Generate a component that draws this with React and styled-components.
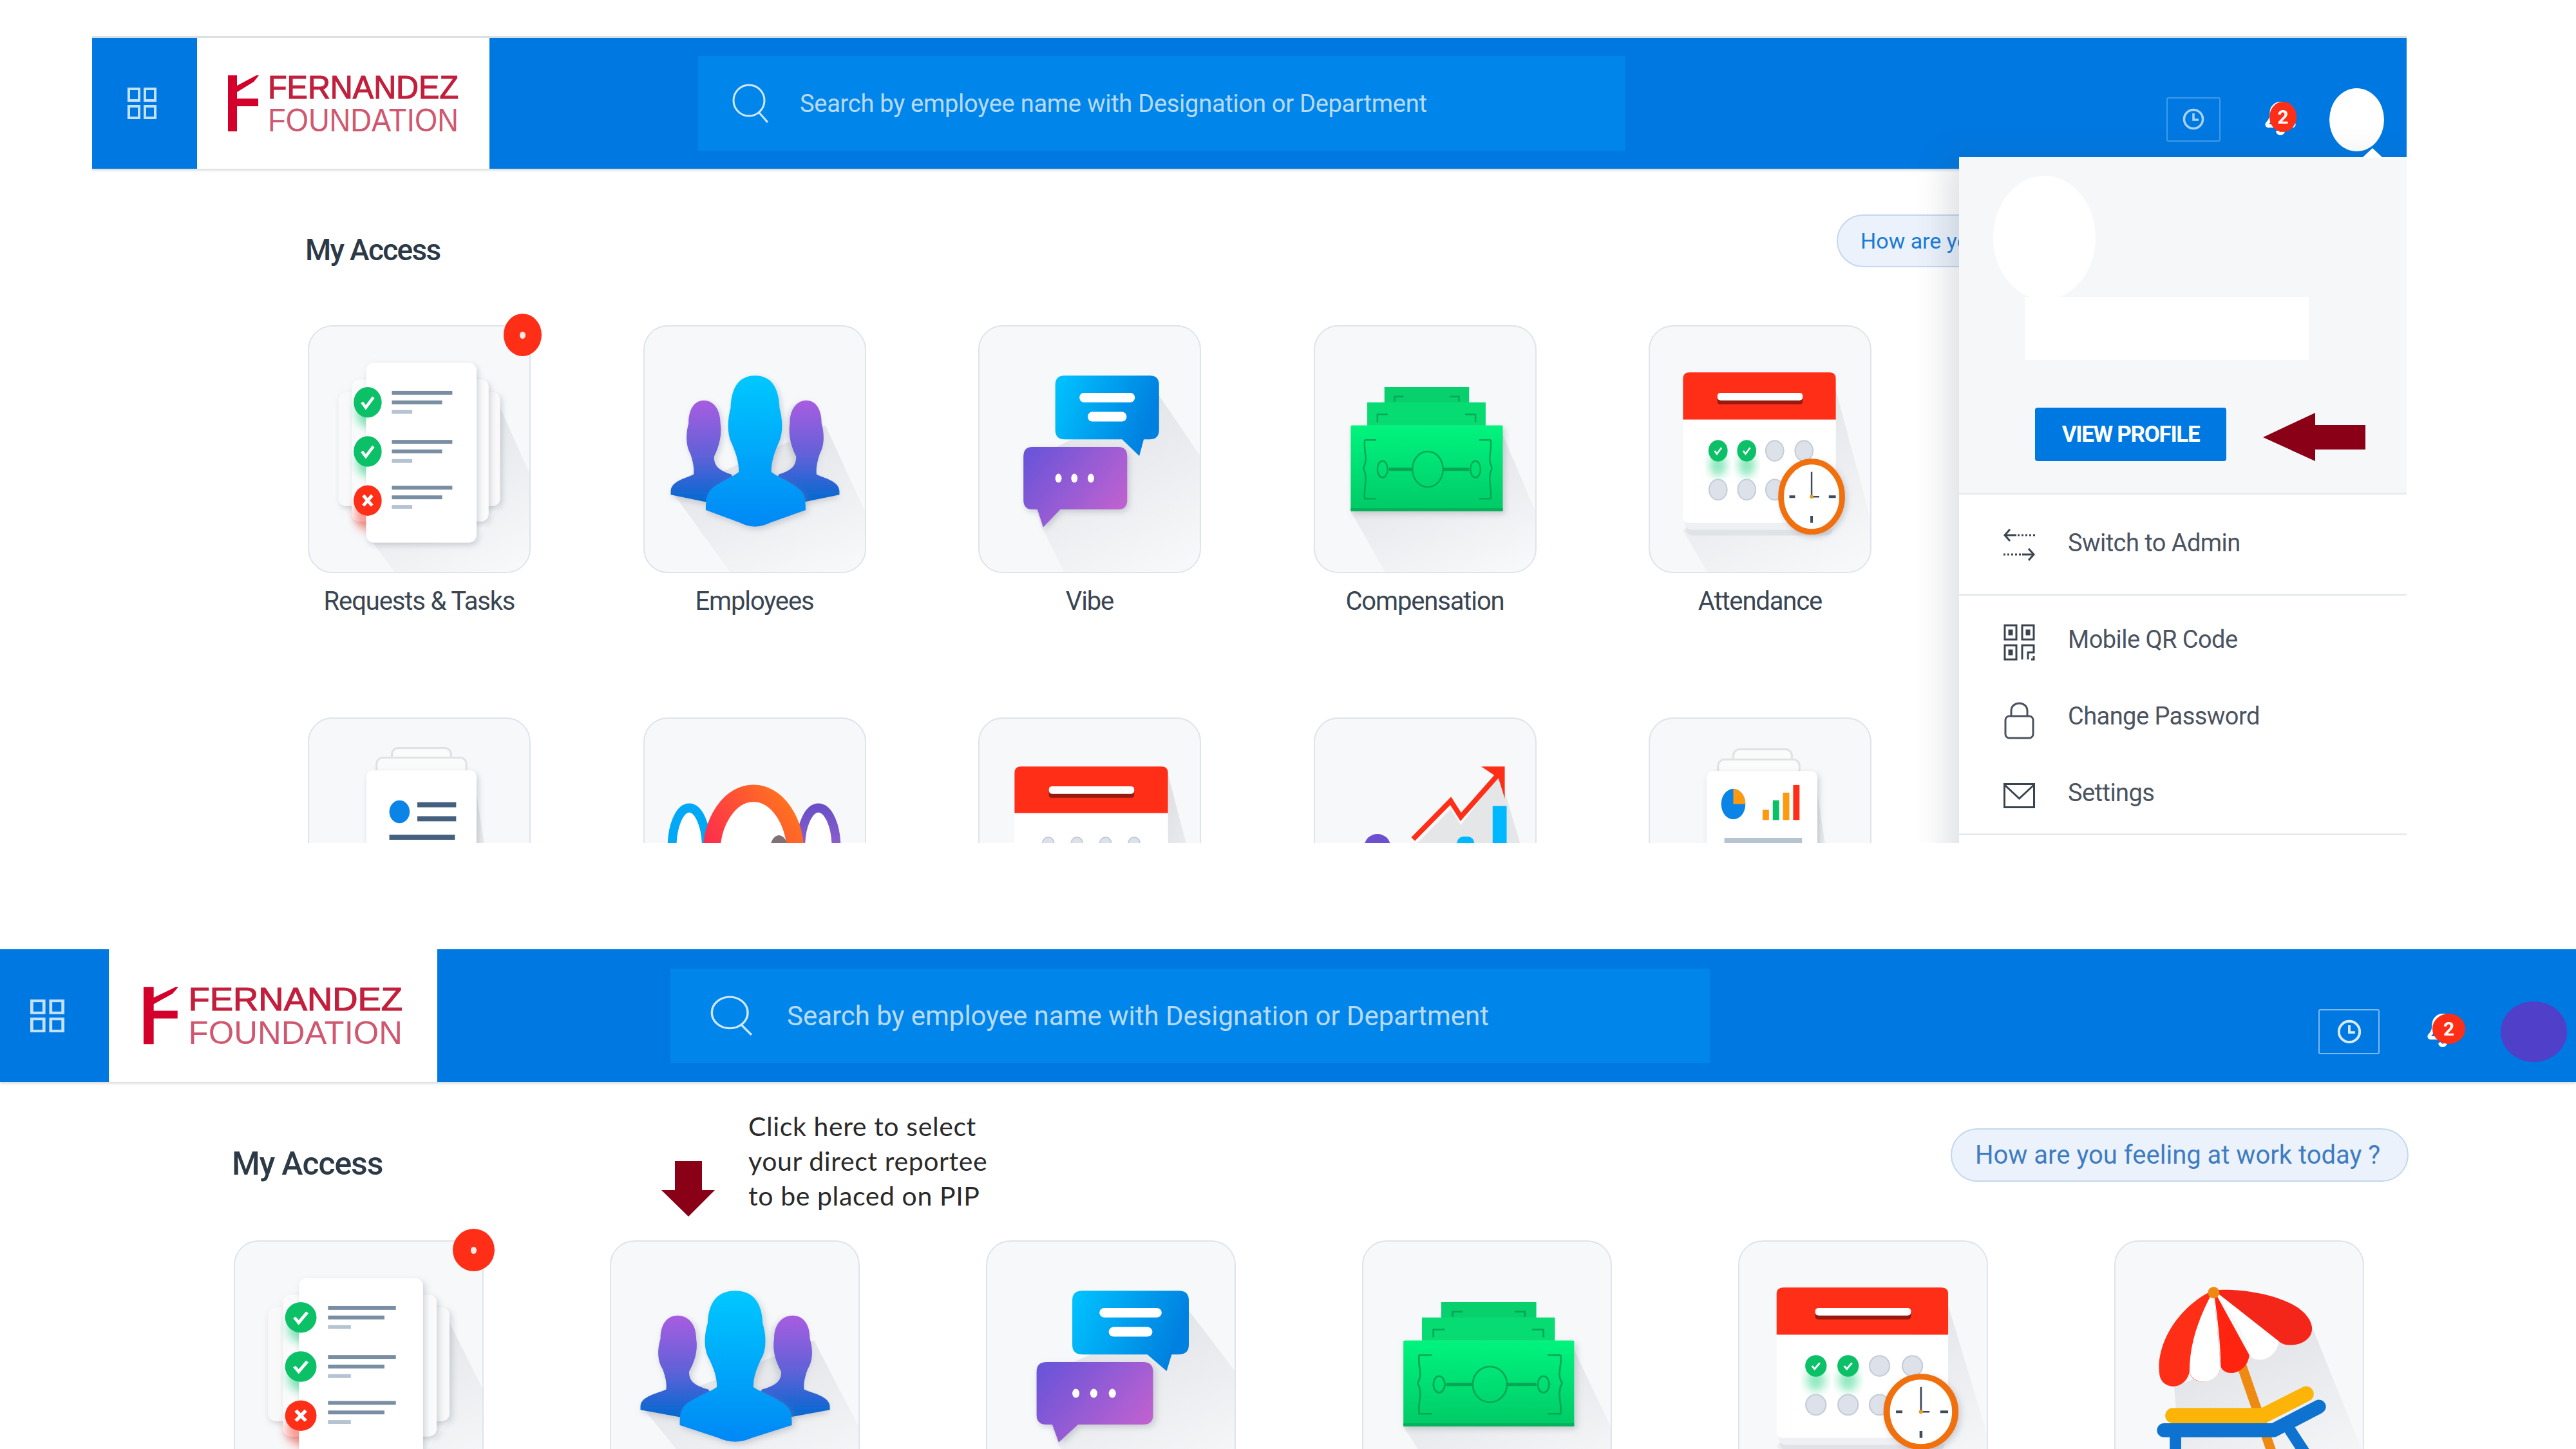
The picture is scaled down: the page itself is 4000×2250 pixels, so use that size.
import React from 'react';
import styled, { createGlobalStyle } from 'styled-components';
import { Bell } from 'lucide-react';

const TOP = {
	headH: 203, line: 3, gridW: 163, gridShift: 8, gridIconW: 45, gridIconH: 49, logoW: 454,
	searchGap: 324, searchW: 1439, searchPad: 53, searchIconW: 56, searchIconH: 61, searchTextGap: 49, searchFs: 38, searchLs: -0.26,
	boxW: 84, boxH: 69, boxLift: 2, clockSize: 34, boxColor: '#3f9bea', clockColor: '#a8d3f5', bellGap: 65, bellW: 53, badgeW: 42,
	avatarGap: 51, avatarW: 85, avatarH: 98, avatarBg: '#fff', actionsBottom: 27, actionsRight: 35,
	bodyLeft: 331, rowTop: 71, titleFs: 46, titleLs: -1.7, pillFs: 34, pillW: 640, pillH: 82, pillColor: '#1a7ad6', rowRight: 245,
	gridTop: 90, gridLeft: 4, colW: 346, colGap: 174.5, textPad: 35,
};
const BOTTOM = {
	headH: 206, line: 0, gridW: 169, gridShift: 22, gridIconW: 53, gridIconH: 51, logoW: 510,
	searchGap: 362, searchW: 1614, searchPad: 62, searchIconW: 65, searchIconH: 62, searchTextGap: 54, searchFs: 42, searchLs: -0.03,
	boxW: 95, boxH: 70, boxLift: 0, clockSize: 38, boxColor: '#7db9ef', clockColor: '#d7ebfb', bellGap: 70, bellW: 63, badgeW: 51,
	avatarGap: 55, avatarW: 103, avatarH: 94, avatarBg: '#4f3fc9', actionsBottom: 31, actionsRight: 14,
	bodyLeft: 360, rowTop: 72, titleFs: 50, titleLs: -1.1, pillFs: 40, pillW: 711, pillH: 83, pillColor: '#3f7cc0', rowRight: 260,
	gridTop: 91, gridLeft: 3, colW: 388, colGap: 196, textPad: 36,
};

const GlobalStyle = createGlobalStyle`
	html, body { margin: 0; padding: 0; background: #fff; }
	body { width: 4000px; height: 2250px; overflow: hidden; font-family: Roboto, 'Liberation Sans', sans-serif; }
`;

const Page = styled.div`
	width: 4000px;
	height: 2250px;
	overflow: hidden;
	background: #fff;
	padding-top: 0.1px;
	box-sizing: border-box;
`;

const TopShot = styled.section`
	position: relative;
	width: 3594px;
	height: 1253px;
	margin: 56px 0 0 143px;
	overflow: hidden;
`;

const BottomShot = styled.section`
	position: relative;
	width: 4000px;
	height: 776px;
	margin-top: 165px;
	overflow: hidden;
`;

const HeaderBar = styled.header`
	display: flex;
	align-items: center;
	height: ${(p) => p.$m.headH + p.$m.line}px;
	box-sizing: border-box;
	background: #0078e1;
	border-top: ${(p) => p.$m.line}px solid #dcdfe3;
	box-shadow: 0 3px 3px rgba(120, 130, 140, 0.25);
`;

const GridCell = styled.div`
	display: flex;
	align-items: center;
	justify-content: center;
	box-sizing: border-box;
	width: ${(p) => p.$m.gridW}px;
	height: 100%;
	padding-right: ${(p) => p.$m.gridShift}px;
	flex: none;
`;

const GridIcon = styled.svg`
	width: ${(p) => p.$m.gridIconW}px;
	height: ${(p) => p.$m.gridIconH}px;
`;

const LogoCell = styled.div`
	width: ${(p) => p.$m.logoW}px;
	height: 100%;
	flex: none;
	background: #fff;
`;

const LogoSvg = styled.svg`
	display: block;
	width: 100%;
	height: 100%;
`;

const SearchBox = styled.div`
	display: flex;
	align-items: center;
	flex: none;
	margin-left: ${(p) => p.$m.searchGap}px;
	width: ${(p) => p.$m.searchW}px;
	height: 147px;
	padding-left: ${(p) => p.$m.searchPad}px;
	box-sizing: border-box;
	background: #0086ea;
	color: #b9daf6;
	font-size: ${(p) => p.$m.searchFs}px;
	letter-spacing: ${(p) => p.$m.searchLs}px;
	white-space: nowrap;
`;

const SearchIcon = styled.svg`
	width: ${(p) => p.$m.searchIconW}px;
	height: ${(p) => p.$m.searchIconH}px;
	margin-right: ${(p) => p.$m.searchTextGap}px;
	flex: none;
`;

const Actions = styled.div`
	display: flex;
	align-items: center;
	margin-left: auto;
	align-self: flex-end;
	margin-bottom: ${(p) => p.$m.actionsBottom}px;
	padding-right: ${(p) => p.$m.actionsRight}px;
`;

const ClockBox = styled.div`
	display: flex;
	align-items: center;
	justify-content: center;
	width: ${(p) => p.$m.boxW}px;
	height: ${(p) => p.$m.boxH}px;
	margin-bottom: ${(p) => p.$m.boxLift}px;
	box-sizing: border-box;
	border: 2px solid ${(p) => p.$m.boxColor};
	border-radius: 3px;
`;

const BellWrap = styled.div`
	position: relative;
	width: ${(p) => p.$m.bellW}px;
	height: 60px;
	margin-left: ${(p) => p.$m.bellGap}px;
	color: #fff;
`;

const BellBadge = styled.span`
	position: absolute;
	top: 2px;
	right: 0;
	display: flex;
	align-items: center;
	justify-content: center;
	width: ${(p) => p.$m.badgeW}px;
	height: 47px;
	border-radius: 50%;
	background: #ff2e17;
	color: #fff;
	font-size: 30px;
	font-weight: 700;
`;

const Avatar = styled.div`
	width: ${(p) => p.$m.avatarW}px;
	height: ${(p) => p.$m.avatarH}px;
	margin-left: ${(p) => p.$m.avatarGap}px;
	border-radius: 50%;
	background: ${(p) => p.$m.avatarBg};
`;

const Body = styled.main`
	padding-left: ${(p) => p.$m.bodyLeft}px;
`;

const TitleRow = styled.div`
	display: flex;
	align-items: flex-start;
	height: ${(p) => p.$m.pillH}px;
	padding-top: ${(p) => p.$m.rowTop}px;
	padding-right: ${(p) => p.$m.rowRight}px;
`;

const Title = styled.h2`
	margin: 25px 0 0;
	line-height: 60px;
	font-size: ${(p) => p.$m.titleFs}px;
	font-weight: 500;
	letter-spacing: ${(p) => p.$m.titleLs}px;
	color: #2c3947;
	white-space: nowrap;
	flex: ${(p) => (p.$w ? `0 0 ${p.$w}px` : 'none')};
`;

const DownArrow = styled.svg`
	flex: none;
	width: 83px;
	height: 86px;
	margin-top: 51px;
`;

const Note = styled.p`
	flex: none;
	margin: -30px 0 0 52px;
	font-family: Lato, 'Open Sans', sans-serif;
	font-size: 41px;
	letter-spacing: 0.6px;
	line-height: 54px;
	color: #2a2a2a;
	white-space: nowrap;
`;

const Pill = styled.div`
	display: flex;
	align-items: center;
	flex: none;
	margin-left: auto;
	width: ${(p) => p.$m.pillW}px;
	height: ${(p) => p.$m.pillH}px;
	padding-left: ${(p) => p.$m.textPad}px;
	box-sizing: border-box;
	background: #ebf2fb;
	border: 2px solid #c3d7ee;
	border-radius: 42px;
	color: ${(p) => p.$m.pillColor};
	font-size: ${(p) => p.$m.pillFs}px;
	white-space: nowrap;
`;

const TileGrid = styled.div`
	display: grid;
	grid-template-columns: repeat(${(p) => p.$cols}, ${(p) => p.$m.colW}px);
	column-gap: ${(p) => p.$m.colGap}px;
	row-gap: 158px;
	margin: ${(p) => p.$m.gridTop}px 0 0 ${(p) => p.$m.gridLeft}px;
`;

const Tile = styled.div`
	display: flex;
	flex-direction: column;
	align-items: center;
`;

const Card = styled.div`
	position: relative;
	box-sizing: border-box;
	width: 100%;
	height: 385px;
	background: #f6f8fa;
	border: 2px solid #dfe4ea;
	border-radius: 38px;
`;

const CardBadge = styled.span`
	position: absolute;
	top: -20px;
	right: -19px;
	display: flex;
	align-items: center;
	justify-content: center;
	width: ${(p) => (p.$m.colW > 346 ? 65 : 59)}px;
	height: 66px;
	border-radius: 50%;
	background: #ff2e17;

	&::after {
		content: '';
		width: 9px;
		height: 11px;
		border-radius: 50%;
		background: #ffe9e6;
	}
`;

const Art = styled.svg.attrs((p) => ({
	viewBox: p.$box || '0 0 346 385',
	preserveAspectRatio: 'none',
}))`
	display: block;
	width: 100%;
	height: 100%;
	border-radius: 36px;
	overflow: hidden;
`;

const Label = styled.div`
	margin-top: 22px;
	line-height: 44px;
	font-size: 40px;
	letter-spacing: -1.15px;
	color: #3a4552;
	white-space: nowrap;
`;

const ProfilePanel = styled.aside`
	position: absolute;
	top: 188px;
	right: 0;
	width: 695px;
	height: 1200px;
	background: #fff;
	box-shadow: -22px 0 44px rgba(70, 80, 95, 0.16);

	&::before {
		content: '';
		position: absolute;
		top: -14px;
		right: 37px;
		border-left: 16px solid transparent;
		border-right: 16px solid transparent;
		border-bottom: 15px solid #fff;
	}
`;

const PanelHead = styled.div`
	box-sizing: border-box;
	height: 524px;
	padding: 29px 0 0 53px;
	background: #f6f7f9;
	border-bottom: 3px solid #e8ebee;
`;

const PanelPhoto = styled.div`
	width: 159px;
	height: 192px;
	border-radius: 50%;
	background: #fff;
`;

const PanelName = styled.div`
	width: 441px;
	height: 98px;
	margin: -4px 0 0 49px;
	background: #fff;
`;

const ButtonRow = styled.div`
	display: flex;
	align-items: flex-end;
	gap: 57px;
	margin: 74px 0 0 65px;
`;

const ViewButton = styled.button`
	width: 297px;
	height: 83px;
	padding: 0;
	border: 0;
	border-radius: 4px;
	background: #0078e1;
	color: #fff;
	font-family: Roboto, sans-serif;
	font-size: 35px;
	font-weight: 700;
	letter-spacing: -1.3px;
`;

const MenuGroup = styled.div`
	box-sizing: border-box;
	height: ${(p) => p.$h}px;
	padding-top: ${(p) => p.$pad}px;
	border-bottom: 3px solid #e8ebee;
`;

const MenuRow = styled.div`
	display: flex;
	align-items: center;
	height: ${(p) => p.$h}px;
	padding-left: 69px;
	font-size: 38px;
	letter-spacing: -0.55px;
	color: #4a5360;
`;

const MenuIcon = styled.svg`
	flex: none;
	width: 49px;
	height: ${(p) => p.$h}px;
	margin: ${(p) => p.$drop}px 51px 0 0;
`;

const Check = ({ x, y, s = 1 }) => (
	<path
		d={`M${x - 9 * s} ${y} l${6 * s} ${8 * s} l${12 * s} ${-16 * s}`}
		fill='none'
		stroke='#fff'
		strokeWidth={4.5 * s}
	/>
);

const ArtDefs = () => (
	<defs>
		<linearGradient id='longShadow' x1='0.3' y1='0' x2='0.8' y2='1'>
			<stop offset='0' stopColor='#dfe1e4' />
			<stop offset='1' stopColor='#f6f8fa' />
		</linearGradient>
		<linearGradient id='blueFig' x1='0' y1='0' x2='0' y2='1'>
			<stop offset='0' stopColor='#00c8ff' />
			<stop offset='1' stopColor='#0088f5' />
		</linearGradient>
		<linearGradient id='sideFig' x1='0' y1='0' x2='0' y2='1'>
			<stop offset='0' stopColor='#a85ce0' />
			<stop offset='0.55' stopColor='#5f62d8' />
			<stop offset='1' stopColor='#0068d0' />
		</linearGradient>
		<linearGradient id='blueBubble' x1='0' y1='0' x2='1' y2='0.3'>
			<stop offset='0' stopColor='#00c4ff' />
			<stop offset='1' stopColor='#0080e0' />
		</linearGradient>
		<linearGradient id='purpleBubble' x1='0' y1='0.2' x2='1' y2='0.8'>
			<stop offset='0' stopColor='#6c55d8' />
			<stop offset='1' stopColor='#c462d0' />
		</linearGradient>
		<linearGradient id='money' x1='0.5' y1='0' x2='0.5' y2='1'>
			<stop offset='0' stopColor='#00f47e' />
			<stop offset='1' stopColor='#00ca66' />
		</linearGradient>
		<linearGradient id='ringHot' x1='0' y1='1' x2='1' y2='0'>
			<stop offset='0' stopColor='#ff1060' />
			<stop offset='1' stopColor='#ff7a1a' />
		</linearGradient>
		<linearGradient id='ringViolet' x1='0' y1='0' x2='0' y2='1'>
			<stop offset='0' stopColor='#6a50c8' />
			<stop offset='1' stopColor='#b070d0' />
		</linearGradient>
		<filter id='soft' x='-30%' y='-30%' width='160%' height='160%'>
			<feGaussianBlur stdDeviation='7' />
		</filter>
		<filter id='drop' x='-20%' y='-20%' width='140%' height='140%'>
			<feDropShadow dx='3' dy='4' stdDeviation='5' floodColor='#8b929b' floodOpacity='0.4' />
		</filter>
	</defs>
);

const TaskLines = ({ y }) => (
	<g>
		<rect x='130' y={y} width='95' height='6' fill='#7a8ea3' />
		<rect x='130' y={y + 15} width='79' height='6' fill='#7a8ea3' />
		<rect x='130' y={y + 30} width='32' height='6' fill='#b6c3d1' />
	</g>
);

const RequestsArt = () => (
	<Art>
		<ArtDefs />
		<polygon points='296,118 346,230 346,385 134,385 100,339 263,339 282,306 300,282' fill='url(#longShadow)' />
		<rect x='46' y='103' width='254' height='179' rx='12' fill='#f9f9fa' filter='url(#drop)' />
		<rect x='67' y='83' width='215' height='223' rx='12' fill='#fbfbfc' filter='url(#drop)' />
		<ellipse cx='92' cy='136' rx='18' ry='22' fill='#19d07b' opacity='0.55' filter='url(#soft)' />
		<ellipse cx='92' cy='213' rx='18' ry='22' fill='#19d07b' opacity='0.55' filter='url(#soft)' />
		<ellipse cx='92' cy='295' rx='20' ry='26' fill='#ff3b2a' opacity='0.5' filter='url(#soft)' />
		<rect x='89.5' y='57' width='173.5' height='282' rx='12' fill='#fff' filter='url(#drop)' />
		<ellipse cx='92' cy='119' rx='22' ry='24' fill='#0cc068' />
		<Check x={92} y={119} />
		<ellipse cx='92' cy='196' rx='22' ry='24' fill='#0cc068' />
		<Check x={92} y={196} />
		<ellipse cx='92' cy='273' rx='22' ry='24' fill='#ff2e17' />
		<path d='M85 265 l14 16 M99 265 l-14 16' stroke='#fff' strokeWidth='5' />
		<TaskLines y={101} />
		<TaskLines y={178} />
		<TaskLines y={250} />
	</Art>
);

const sidePath =
	'M93 116 C78 116 69 130 69 152 C64 170 65 188 72 200 C76 212 78 222 77 232 C66 238 42 242 41 258 L41 264 L100 276 L160 276 L136 232 C118 226 109 220 109 204 C116 190 122 172 119 152 C119 130 108 116 93 116 Z';

const EmployeesArt = () => (
	<Art>
		<ArtDefs />
		<polygon points='284,155 346,290 346,385 134,385 45,262' fill='url(#longShadow)' />
		<path d={sidePath} fill='url(#sideFig)' filter='url(#drop)' />
		<path d={sidePath} fill='url(#sideFig)' filter='url(#drop)' transform='matrix(-1 0 0 1 347 0)' />
		<path
			d='M173.5 77 C148 77 136 96 135 128 C130 146 129 168 137 184 C143 198 148 212 148 228 C138 236 118 244 106 254 C98 262 96 270 96 288 L150 308 Q173 320 197 308 L253 288 C253 270 251 262 241 254 C229 244 209 236 199 228 C199 212 204 198 210 184 C218 168 217 146 212 128 C211 96 199 77 173.5 77 Z'
			fill='url(#blueFig)'
			filter='url(#drop)'
		/>
	</Art>
);

const VibeArt = () => (
	<Art>
		<ArtDefs />
		<polygon points='282,108 346,202 346,385 133,385 98,315 70,230 119,190' fill='url(#longShadow)' />
		<path
			d='M133 77 H268 Q282 77 282 92 V162 Q282 177 268 177 H258 L251 203 L224 177 H133 Q119 177 119 162 V92 Q119 77 133 77 Z'
			fill='url(#blueBubble)'
		/>
		<rect x='157' y='104' width='87' height='15' rx='7' fill='#fff' />
		<rect x='170' y='134' width='61' height='15' rx='7' fill='#fff' />
		<path
			d='M83 189 H218 Q232 189 232 204 V272 Q232 287 218 287 H127 L100 315 L91 287 H83 Q69 287 69 272 V204 Q69 189 83 189 Z'
			fill='url(#purpleBubble)'
			filter='url(#drop)'
		/>
		<ellipse cx='124' cy='238' rx='5' ry='7' fill='#fff' />
		<ellipse cx='149' cy='238' rx='5' ry='7' fill='#fff' />
		<ellipse cx='175' cy='238' rx='5' ry='7' fill='#fff' />
	</Art>
);

const CompensationArt = () => (
	<Art>
		<ArtDefs />
		<polygon points='295,170 346,290 346,385 110,385 56,290' fill='url(#longShadow)' />
		<rect x='109' y='95' width='133' height='30' fill='#08d06c' />
		<path d='M125 118 v-8 h14 M226 118 v-8 h-14' fill='none' stroke='#06a655' strokeWidth='2.5' />
		<rect x='82' y='119' width='186' height='40' fill='#06dc72' />
		<path d='M98 150 v-12 h16 M252 150 v-12 h-16' fill='none' stroke='#06a655' strokeWidth='2.5' />
		<rect x='56' y='155' width='239' height='135' rx='2' fill='url(#money)' filter='url(#drop)' />
		<rect x='56' y='285' width='239' height='5' fill='#05b25a' />
		<g fill='none' stroke='#06a655' strokeWidth='2.5'>
			<ellipse cx='177' cy='224' rx='24' ry='28' />
			<ellipse cx='106' cy='224' rx='8' ry='13' />
			<ellipse cx='252' cy='224' rx='8' ry='13' />
			<path d='M116 224 H153 M201 224 H242' strokeWidth='5' />
			<path d='M78 178 H96 M78 178 C76 200 84 206 76 222 C84 240 76 250 78 270 H96' />
			<path d='M276 178 H258 M276 178 C278 200 270 206 278 222 C270 240 278 250 276 270 H258' />
		</g>
	</Art>
);

const Dot = ({ x, y, on }) =>
	on ? (
		<g>
			<ellipse cx={x} cy={y + 22} rx='13' ry='18' fill='#19d07b' opacity='0.5' filter='url(#soft)' />
			<ellipse cx={x} cy={y} rx='15' ry='17' fill='#0cc068' />
			<Check x={x} y={y} s={0.6} />
		</g>
	) : (
		<ellipse cx={x} cy={y} rx='14' ry='16' fill='#dde2ea' stroke='#c5ccd8' strokeWidth='2' />
	);

const AttendanceArt = () => (
	<Art>
		<ArtDefs />
		<polygon points='292,100 346,300 346,385 90,385 52,320' fill='url(#longShadow)' />
		<rect x='57' y='290' width='230' height='38' rx='10' fill='#dfe3e8' />
		<rect x='55' y='285' width='235' height='34' rx='10' fill='#eef0f3' />
		<path d='M52 146 H292 V298 Q292 308 282 308 H62 Q52 308 52 298 Z' fill='#fff' />
		<path d='M62 72 H282 Q292 72 292 82 V146 H52 V82 Q52 72 62 72 Z' fill='#ff2e17' />
		<rect x='106' y='108' width='134' height='14' rx='4' fill='#961a10' />
		<rect x='106' y='104' width='134' height='12' rx='5' fill='#fff' />
		<Dot x={107} y={195} on />
		<Dot x={152} y={195} on />
		<Dot x={196} y={195} />
		<Dot x={242} y={195} />
		<Dot x={107} y={256} />
		<Dot x={152} y={256} />
		<Dot x={196} y={256} />
		<ellipse cx='254' cy='267' rx='48' ry='55' fill='#fff' stroke='#f07010' strokeWidth='9' filter='url(#drop)' />
		<path d='M254 228 V267 H266' stroke='#3d4b5c' strokeWidth='2.5' fill='none' />
		<path d='M254 297 v11 M219 267 h9 M281 267 h11' stroke='#3d4b5c' strokeWidth='4' fill='none' />
		<circle cx='254' cy='267' r='3' fill='#e0a020' />
	</Art>
);

const IdCardArt = () => (
	<Art>
		<ArtDefs />
		<g transform='translate(0 -23)'>
			<polygon points='263,140 300,385 230,385' fill='url(#longShadow)' />
			<rect x='130' y='69' width='93' height='50' rx='10' fill='#fafbfb' stroke='#dfe1e4' strokeWidth='3' />
			<rect x='106' y='84' width='141' height='50' rx='10' fill='#fafbfb' stroke='#dfe1e4' strokeWidth='3' />
			<rect x='90' y='104' width='173' height='240' rx='10' fill='#fff' filter='url(#drop)' />
			<ellipse cx='142' cy='169' rx='16' ry='18' fill='#0a84e6' />
			<rect x='170' y='154' width='61' height='8' fill='#45607f' />
			<rect x='170' y='176' width='61' height='8' fill='#45607f' />
			<rect x='126' y='205' width='103' height='8' fill='#45607f' />
		</g>
	</Art>
);

const PeopleArt = () => (
	<Art>
		<ArtDefs />
		<g transform='translate(0 -23)'>
			<ellipse cx='70' cy='225' rx='27' ry='62' fill='#fff' stroke='#00a8f5' strokeWidth='14' />
			<ellipse cx='273' cy='225' rx='28' ry='62' fill='#fff' stroke='url(#ringViolet)' strokeWidth='14' />
			<ellipse cx='171' cy='235' rx='66' ry='95' fill='#fff' stroke='url(#ringHot)' strokeWidth='27' />
			<ellipse cx='211' cy='228' rx='14' ry='22' fill='#7f7277' />
		</g>
	</Art>
);

const CalendarArt = () => (
	<Art>
		<ArtDefs />
		<g transform='translate(0 -23)'>
			<polygon points='296,110 346,300 346,385 296,385' fill='url(#longShadow)' />
			<path d='M55 171 H296 V385 H55 Z' fill='#fff' />
			<path d='M65 98 H286 Q296 98 296 108 V171 H55 V108 Q55 98 65 98 Z' fill='#ff2e17' />
			<rect x='109' y='133' width='134' height='14' rx='4' fill='#961a10' />
			<rect x='109' y='129' width='134' height='12' rx='5' fill='#fff' />
			{[108, 153, 198, 243].map((x) => (
				<ellipse key={x} cx={x} cy='218' rx='9' ry='9' fill='#dde2ea' stroke='#c5ccd8' strokeWidth='2' />
			))}
		</g>
	</Art>
);

const GrowthArt = () => (
	<Art>
		<ArtDefs />
		<g transform='translate(0 -23)'>
			<polygon points='290,110 346,300 346,385 154,385 154,225 213,165 229,190' fill='#e5e6e8' />
			<ellipse cx='98' cy='222' rx='20' ry='18' fill='#6d50d0' />
			<rect x='223' y='208' width='27' height='60' rx='10' fill='#00b8ff' />
			<rect x='279' y='160' width='22' height='100' fill='#00b8ff' />
			<path d='M154 212 L213 152 L229 177 L290 108' fill='none' stroke='#ff2e17' strokeWidth='8' />
			<path d='M261 98 H298 V148 L288 116 Z' fill='#ff2e17' />
		</g>
	</Art>
);

const ReportArt = () => (
	<Art>
		<ArtDefs />
		<g transform='translate(0 -23)'>
			<polygon points='263,140 300,385 230,385' fill='url(#longShadow)' />
			<rect x='131' y='71' width='92' height='50' rx='10' fill='#fafbfb' stroke='#dfe1e4' strokeWidth='3' />
			<rect x='107' y='87' width='128' height='50' rx='10' fill='#fafbfb' stroke='#dfe1e4' strokeWidth='3' />
			<rect x='89' y='105' width='174' height='240' rx='10' fill='#fff' filter='url(#drop)' />
			<ellipse cx='131' cy='157' rx='19' ry='24' fill='#0a84e6' />
			<path d='M131 157 V133 A19 24 0 0 1 150 157 Z' fill='#ff9a10' />
			<rect x='177' y='166' width='10' height='16' fill='#ff9a10' />
			<rect x='193' y='151' width='10' height='31' fill='#0cc068' />
			<rect x='209' y='139' width='10' height='43' fill='#ff9a10' />
			<rect x='225' y='127' width='10' height='55' fill='#ff2e17' />
			<rect x='117' y='210' width='122' height='12' fill='#b6c3d1' />
		</g>
	</Art>
);

const LeaveArt = () => (
	<Art $box='0 0 388 385'>
		<ArtDefs />
		<polygon points='308,133 388,330 388,385 150,385 100,320 92,229' fill='url(#longShadow)' />
		<path d='M196 189 L245 330' stroke='#ee8a12' strokeWidth='15' fill='none' />
		<path d='M154 76 C100 100 62 160 69 209 C72 232 108 236 116 205 C120 226 160 226 165 196 L154 76 Z' fill='#ff2e17' />
		<path d='M154 76 C130 120 116 160 116 205 C122 226 160 226 165 196 Z' fill='#fff' />
		<path d='M154 76 C160 120 165 160 165 196 C172 214 206 208 210 178 Z' fill='#ff2410' />
		<path d='M154 76 C180 110 204 140 210 178 C224 194 254 182 256 156 Z' fill='#fff' />
		<path d='M154 76 C210 72 300 90 308 133 C312 160 270 170 256 156 Z' fill='#f4261a' />
		<circle cx='154' cy='80' r='9' fill='#ee8a12' />
		<path d='M90 273 H232 L299 239' stroke='#fdb408' strokeWidth='24' strokeLinejoin='round' strokeLinecap='round' fill='none' />
		<path d='M76 296 H248 L319 259' stroke='#0d72d0' strokeWidth='22' strokeLinejoin='round' strokeLinecap='round' fill='none' />
		<path d='M94 300 V330 M270 290 L296 330' stroke='#0d72d0' strokeWidth='18' strokeLinecap='round' />
	</Art>
);

const Logo = () => (
	<LogoSvg viewBox='0 0 454 203' preserveAspectRatio='none'>
		<path d='M48 58 H62 V145 H48 Z M62 94 H95 V106 H62 Z M62 74 L92 58 H96 L88 68 L62 84 Z' fill='#d2002a' />
		<text
			x='110'
			y='94'
			textLength='296'
			lengthAdjust='spacingAndGlyphs'
			fontFamily='Liberation Sans, sans-serif'
			fontSize='50'
			fill='#c21f3c'
			stroke='#c21f3c'
			strokeWidth='1.2'
		>
			FERNANDEZ
		</text>
		<text
			x='110'
			y='145'
			textLength='296'
			lengthAdjust='spacingAndGlyphs'
			fontFamily='Liberation Sans, sans-serif'
			fontSize='50'
			fill='#cf5870'
		>
			FOUNDATION
		</text>
	</LogoSvg>
);

const Header = ({ m }) => (
	<HeaderBar $m={m}>
		<GridCell $m={m}>
			<GridIcon $m={m} viewBox='0 0 45 49' preserveAspectRatio='none' fill='none' stroke='#c3e1fa' strokeWidth='4'>
				<rect x='2' y='2' width='16' height='18' />
				<rect x='27' y='2' width='16' height='18' />
				<rect x='2' y='29' width='16' height='18' />
				<rect x='27' y='29' width='16' height='18' />
			</GridIcon>
		</GridCell>
		<LogoCell $m={m}>
			<Logo />
		</LogoCell>
		<SearchBox $m={m}>
			<SearchIcon $m={m} viewBox='0 0 56 61' preserveAspectRatio='none' fill='none' stroke='#d2e6f8' strokeWidth='3'>
				<ellipse cx='26' cy='26' rx='24' ry='24' />
				<path d='M41 44 L55 60' />
			</SearchIcon>
			Search by employee name with Designation or Department
		</SearchBox>
		<Actions $m={m}>
			<ClockBox $m={m}>
				<svg width={m.clockSize} height={m.clockSize} viewBox='0 0 34 34' fill='none' stroke={m.clockColor} strokeWidth='3.5'>
					<circle cx='17' cy='17' r='14.5' />
					<path d='M17 8 V18 H25' />
				</svg>
			</ClockBox>
			<BellWrap $m={m}>
				<Bell size={56} strokeWidth={2.2} />
				<BellBadge $m={m}>2</BellBadge>
			</BellWrap>
			<Avatar $m={m} />
		</Actions>
	</HeaderBar>
);

const FIRST_ROW = [
	{ label: 'Requests & Tasks', art: RequestsArt, badge: true },
	{ label: 'Employees', art: EmployeesArt },
	{ label: 'Vibe', art: VibeArt },
	{ label: 'Compensation', art: CompensationArt },
	{ label: 'Attendance', art: AttendanceArt },
];

const SECOND_ROW = [{ art: IdCardArt }, { art: PeopleArt }, { art: CalendarArt }, { art: GrowthArt }, { art: ReportArt }];

const Tiles = ({ m, items, cols }) => (
	<TileGrid $m={m} $cols={cols}>
		{items.map(({ label, art: ArtPart, badge }, i) => (
			<Tile key={i}>
				<Card>
					<ArtPart />
					{badge && <CardBadge $m={m} />}
				</Card>
				{label && <Label>{label}</Label>}
			</Tile>
		))}
	</TileGrid>
);

const Panel = () => (
	<ProfilePanel>
		<PanelHead>
			<PanelPhoto />
			<PanelName />
			<ButtonRow>
				<ViewButton>VIEW PROFILE</ViewButton>
				<svg width='159' height='75' viewBox='0 0 159 75'>
					<path d='M0 38 L81 0 V19 H159 V57 H81 V75 Z' fill='#8a0016' />
				</svg>
			</ButtonRow>
		</PanelHead>
		<MenuGroup $h={157} $pad={0}>
			<MenuRow $h={150}>
				<MenuIcon $h={54} $drop={6} viewBox='0 0 49 54' fill='none' stroke='#3a4450' strokeWidth='3'>
					<path d='M2 12 H20' />
					<path d='M10 3 L2 12 L10 21' />
					<path d='M22 12 H49' strokeDasharray='3 3' />
					<path d='M47 42 H29' />
					<path d='M39 33 L47 42 L39 51' />
					<path d='M0 42 H27' strokeDasharray='3 3' />
				</MenuIcon>
				Switch to Admin
			</MenuRow>
		</MenuGroup>
		<MenuGroup $h={372} $pad={8}>
			<MenuRow $h={119}>
				<MenuIcon $h={57} $drop={10} viewBox='0 0 49 57' fill='none' stroke='#3a4450' strokeWidth='3'>
					<rect x='2' y='2' width='18' height='22' />
					<rect x='29' y='2' width='18' height='22' />
					<rect x='2' y='33' width='18' height='22' />
					<path d='M29 55 V33 H47 V44 H38 V55 M47 50 V55 H43' />
					<rect x='9' y='10' width='4' height='6' fill='#3a4450' />
					<rect x='36' y='10' width='4' height='6' fill='#3a4450' />
					<rect x='9' y='41' width='4' height='6' fill='#3a4450' />
				</MenuIcon>
				Mobile QR Code
			</MenuRow>
			<MenuRow $h={119}>
				<MenuIcon $h={58} $drop={14} viewBox='0 0 49 58' fill='none' stroke='#4a5360' strokeWidth='3'>
					<rect x='3' y='22' width='43' height='34' rx='6' />
					<path d='M12 22 V14 C12 -2 37 -2 37 14 V22' />
				</MenuIcon>
				Change Password
			</MenuRow>
			<MenuRow $h={119}>
				<MenuIcon $h={39} $drop={10} viewBox='0 0 49 39' fill='none' stroke='#3a4450' strokeWidth='3'>
					<rect x='1.5' y='1.5' width='46' height='36' />
					<path d='M2 3 L24.5 24 L47 3' />
				</MenuIcon>
				Settings
			</MenuRow>
		</MenuGroup>
	</ProfilePanel>
);

const App = () => (
	<Page>
		<GlobalStyle />
		<TopShot>
			<Header m={TOP} />
			<Body $m={TOP}>
				<TitleRow $m={TOP}>
					<Title $m={TOP}>My Access</Title>
					<Pill $m={TOP}>How are you feeling at work today ?</Pill>
				</TitleRow>
				<Tiles m={TOP} items={[...FIRST_ROW, ...SECOND_ROW]} cols={5} />
			</Body>
			<Panel />
		</TopShot>
		<BottomShot>
			<Header m={BOTTOM} />
			<Body $m={BOTTOM}>
				<TitleRow $m={BOTTOM}>
					<Title $m={BOTTOM} $w={667}>My Access</Title>
					<DownArrow viewBox='0 0 83 86'>
						<path d='M21 0 H63 V45 H83 L42 86 L0 45 H21 Z' fill='#8a0016' />
					</DownArrow>
					<Note>
						Click here to select
						<br />
						your direct reportee
						<br />
						to be placed on PIP
					</Note>
					<Pill $m={BOTTOM}>How are you feeling at work today ?</Pill>
				</TitleRow>
				<Tiles
					m={BOTTOM}
					items={[...FIRST_ROW.map(({ art, badge }) => ({ art, badge })), { art: LeaveArt }]}
					cols={6}
				/>
			</Body>
		</BottomShot>
	</Page>
);

export default App;
